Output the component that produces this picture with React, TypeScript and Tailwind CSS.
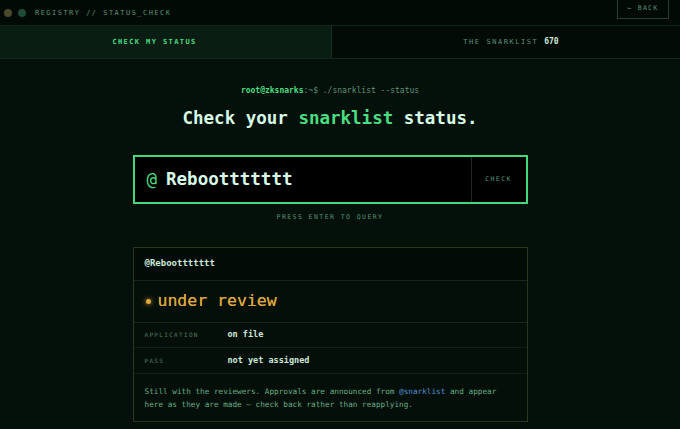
export default function App() {
  const mono = { fontFamily: '"DejaVu Sans Mono", "Liberation Mono", monospace' };
  return (
    <div style={mono} className="h-[429px] w-[680px] overflow-hidden bg-[#04110b] text-[#d1fae5]">
      {/* top bar */}
      <div className="flex h-[26px] items-start justify-between border-b border-[#0d2418] bg-[#020a06]">
        <div className="flex h-[26px] items-center gap-[6px] pl-[4px]">
          <span className="h-[8px] w-[8px] rounded-full bg-[#4a4a2a]" />
          <span className="h-[8px] w-[8px] rounded-full bg-[#1f4a34]" />
          <span className="ml-[3px] text-[7px] tracking-[0.21em] text-[#5a9274]">REGISTRY // STATUS_CHECK</span>
        </div>
        <button className="mr-[11px] flex h-[19px] w-[52px] items-center justify-center gap-[5px] border border-t-0 border-[#24402f] text-[6.5px] tracking-[0.2em] text-[#5a9274]">
          <span>←</span>
          <span>BACK</span>
        </button>
      </div>

      {/* tabs */}
      <div className="grid h-[33px] grid-cols-[332px_1fr] border-b border-[#10281b]">
        <div className="flex items-center justify-center border-r border-[#143021] bg-[#0a1d13] pr-[22px] text-[7px] font-bold tracking-[0.2em] text-[#4ade80]">
          CHECK MY STATUS
        </div>
        <div className="flex items-center justify-center gap-[6px] bg-[#030b07] pl-[10px]">
          <span className="text-[7px] tracking-[0.22em] text-[#5a9274]">THE SNARKLIST</span>
          <span className="text-[8px] font-bold text-[#cfe9d9]">670</span>
        </div>
      </div>

      {/* main */}
      <div className="flex flex-col items-center pr-[20px] pt-[26px]">
        <div className="text-[8px] text-[#62907a]">
          <span className="font-bold text-[#4ade80]">root@zksnarks</span>:~$ ./snarklist --status
        </div>
        <h1 className="mt-[9px] text-[17.5px] font-bold leading-[24px] text-[#d8fbe6]">
          Check your <span className="text-[#4ade80]">snarklist</span> status.
        </h1>

        <div className="mt-[25px] flex h-[49px] w-[395px] border-2 border-[#46d67c] bg-[#000000]">
          <div className="flex flex-1 items-center pl-[12px]">
            <span className="text-[17.5px] text-[#4ade80]">@</span>
            <span className="ml-[9px] text-[17.5px] font-bold text-[#d8fbe6]">Reboottttttt</span>
          </div>
          <div className="flex w-[55px] items-center justify-center border-l border-[#1f2a22] text-[6.5px] tracking-[0.22em] text-[#5a9274]">
            CHECK
          </div>
        </div>
        <div className="mt-[9px] text-[6.5px] tracking-[0.22em] text-[#5a9274]">PRESS ENTER TO QUERY</div>

        {/* result card */}
        <div className="mt-[24px] w-[395px] border border-[#2a361e] bg-[#050f09]">
          <div className="flex h-[33px] items-center border-b border-[#17261a] bg-[#030b07] pl-[11px] text-[9px] font-bold text-[#cfe9d9]">
            @Reboottttttt
          </div>
          <div className="flex h-[42px] items-center gap-[7px] border-b border-[#17261a] pl-[12px]">
            <span className="h-[5px] w-[5px] rounded-full bg-[#e0a93a] shadow-[0_0_5px_#e0a93a]" />
            <span className="text-[16.5px] text-[#dba63c] [text-shadow:0_0_0.4px_#dba63c]">under review</span>
          </div>
          <div className="flex h-[25px] items-center border-b border-[#12201a] pl-[11px]">
            <span className="w-[83px] text-[6px] tracking-[0.22em] text-[#4d7f61]">APPLICATION</span>
            <span className="text-[8.5px] font-bold text-[#cfe9d9]">on file</span>
          </div>
          <div className="flex h-[26px] items-center border-b border-[#12201a] pl-[11px]">
            <span className="w-[83px] text-[6px] tracking-[0.22em] text-[#4d7f61]">PASS</span>
            <span className="text-[8.5px] font-bold text-[#cfe9d9]">not yet assigned</span>
          </div>
          <div className="px-[11px] pb-[10px] pt-[11px] text-[7.7px] leading-[13px] text-[#66ad83]">
            <p>
              Still with the reviewers. Approvals are announced from <span className="text-[#4f8fd8]">@snarklist</span> and appear
            </p>
            <p>here as they are made — check back rather than reapplying.</p>
          </div>
        </div>
      </div>
    </div>
  );
}
